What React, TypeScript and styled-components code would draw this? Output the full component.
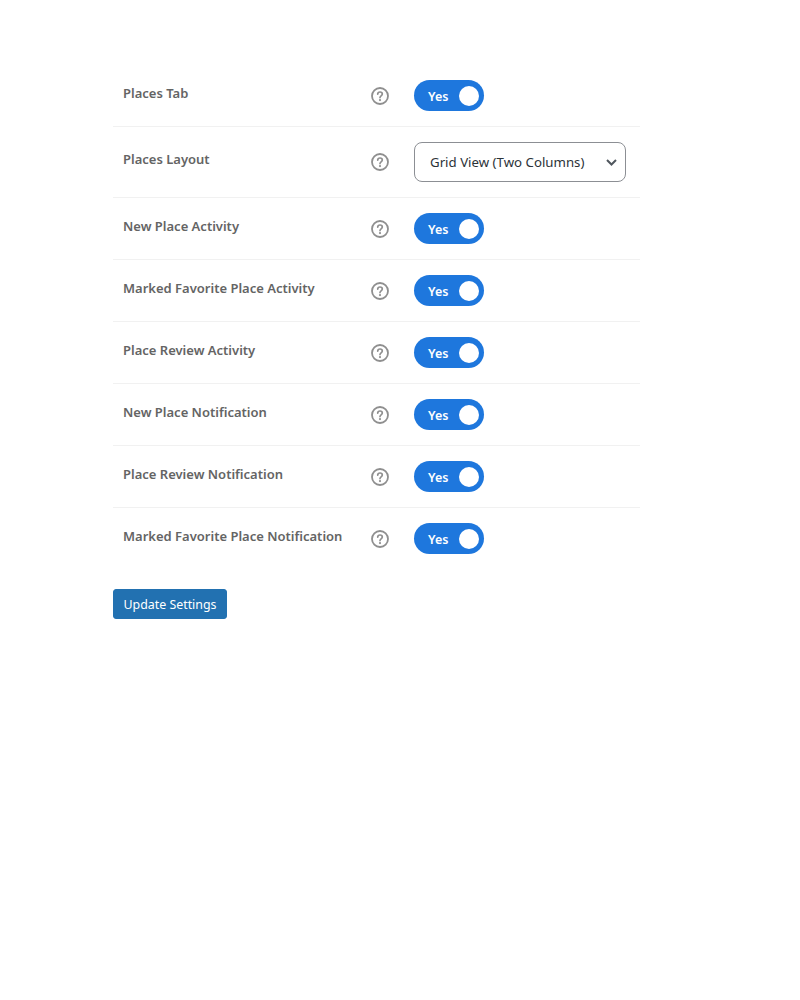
import styled, { createGlobalStyle } from "styled-components";

const GlobalStyle = createGlobalStyle`
  body {
    margin: 0;
    background: #fff;
    font-family: "Noto Sans", "Open Sans", sans-serif;
  }
`;

const Page = styled.div`
  padding: 65px 0 0 113px;
  width: 527px;
`;

const Row = styled.div`
  display: grid;
  grid-template-columns: 257px 44px 1fr;
  align-items: start;
  padding: 15px 0;
  border-bottom: 1px solid #f1f1f1;

  &:last-of-type {
    border-bottom: 0;
  }
`;

const Label = styled.div<{ $tall?: boolean }>`
  padding: ${(p) => (p.$tall ? "4px" : "0")} 0 0 10px;
  font-size: 13px;
  line-height: 26px;
  font-weight: 600;
  color: #646464;
`;

const HelpCell = styled.div<{ $tall?: boolean }>`
  display: flex;
  align-items: center;
  height: ${(p) => (p.$tall ? "40px" : "31px")};
  padding-left: 1px;
`;

const Toggle = styled.div`
  width: 70px;
  height: 31px;
  box-sizing: border-box;
  display: flex;
  align-items: center;
  justify-content: space-between;
  padding: 0 5px 0 14px;
  border-radius: 16px;
  background: #1e77dd;
`;

const ToggleText = styled.span`
  padding-top: 1px;
  color: #fff;
  font-size: 12.5px;
  font-weight: 600;
`;

const Knob = styled.span`
  width: 20px;
  height: 20px;
  border-radius: 50%;
  background: #fff;
`;

const SelectBox = styled.div`
  width: 212px;
  height: 40px;
  box-sizing: border-box;
  display: flex;
  align-items: center;
  justify-content: space-between;
  padding: 0 8px 0 15px;
  border: 1px solid #8c8f94;
  border-radius: 8px;
  background: #fff;
  font-size: 13.25px;
  color: #2c3338;
`;

const UpdateButton = styled.button`
  display: block;
  width: 114px;
  height: 30px;
  margin-top: 20px;
  padding: 0;
  border: 1px solid #2271b1;
  border-radius: 3px;
  background: #2271b1;
  color: #fff;
  font-family: inherit;
  font-size: 12.4px;
`;

function HelpIcon() {
  return (
    <svg width="18" height="18" viewBox="0 0 18 18" fill="none">
      <circle cx="9" cy="9" r="8" stroke="#8f8f8f" strokeWidth="1.8" />
      <path
        d="M6.7 7.1c.1-1.3 1-2.1 2.3-2.1s2.3.8 2.3 2c0 1.9-2.3 1.8-2.3 3.6"
        stroke="#8f8f8f"
        strokeWidth="1.7"
        strokeLinecap="round"
      />
      <circle cx="9" cy="13.1" r="1.1" fill="#8f8f8f" />
    </svg>
  );
}

function Chevron() {
  return (
    <svg width="11" height="7" viewBox="0 0 11 7" fill="none">
      <path d="M1 1l4.5 4.5L10 1" stroke="#50575e" strokeWidth="2" />
    </svg>
  );
}

const toggleRows = [
  "New Place Activity",
  "Marked Favorite Place Activity",
  "Place Review Activity",
  "New Place Notification",
  "Place Review Notification",
  "Marked Favorite Place Notification",
];

function ToggleRow({ label }: { label: string }) {
  return (
    <Row>
      <Label>{label}</Label>
      <HelpCell>
        <HelpIcon />
      </HelpCell>
      <Toggle>
        <ToggleText>Yes</ToggleText>
        <Knob />
      </Toggle>
    </Row>
  );
}

export default function App() {
  return (
    <Page>
      <GlobalStyle />
      <ToggleRow label="Places Tab" />
      <Row>
        <Label $tall>Places Layout</Label>
        <HelpCell $tall>
          <HelpIcon />
        </HelpCell>
        <SelectBox>
          Grid View (Two Columns)
          <Chevron />
        </SelectBox>
      </Row>
      {toggleRows.map((label) => (
        <ToggleRow key={label} label={label} />
      ))}
      <UpdateButton>Update Settings</UpdateButton>
    </Page>
  );
}
